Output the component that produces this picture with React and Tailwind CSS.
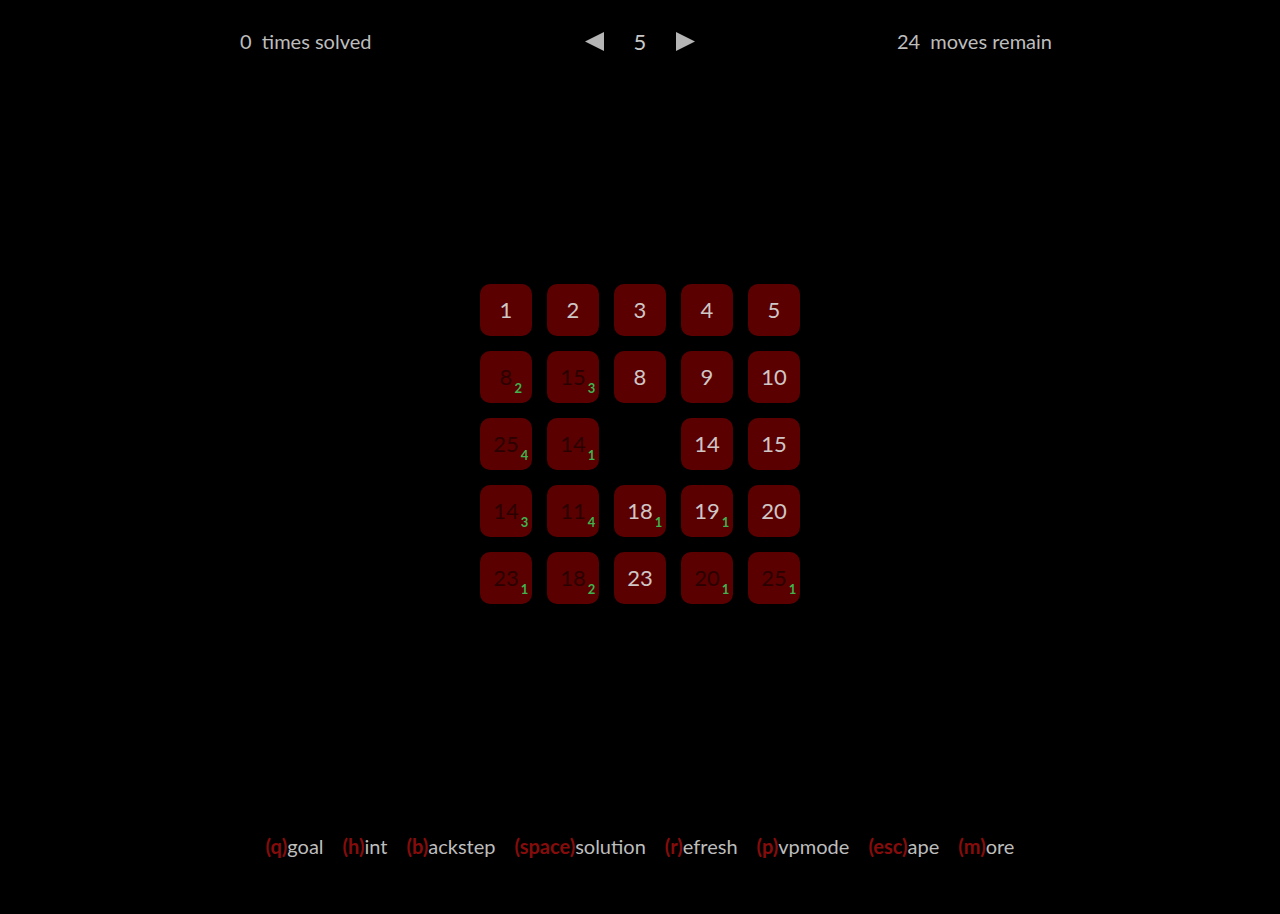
const rows = [
  [[1], [2], [3], [4], [5]],
  [[8, 2, true], [15, 3, true], [8], [9], [10]],
  [[25, 4, true], [14, 1, true], null, [14], [15]],
  [[14, 3, true], [11, 4, true], [18, 1], [19, 1], [20]],
  [[23, 1, true], [18, 2, true], [23], [20, 1, true], [25, 1, true]],
]

const keys = [
  ['q', 'goal'],
  ['h', 'int'],
  ['b', 'ackstep'],
  ['space', 'solution'],
  ['r', 'efresh'],
  ['p', 'vpmode'],
  ['esc', 'ape'],
  ['m', 'ore'],
]

function Tile({ cell }) {
  if (!cell) return <div className="w-[52px] h-[52px]" />
  const [n, hint, dim] = cell
  return (
    <div className="w-[52px] h-[52px] rounded-[10px] bg-[#5a0000] flex items-center justify-center">
      <span className={'relative text-[22px] leading-none ' + (dim ? 'text-[#2a0101]' : 'text-[#cfc6c6]')}>
        {n}
        {hint && (
          <span className="absolute left-full ml-[2px] top-[16px] text-[13px] font-bold leading-none text-[#3fb34f]">
            {hint}
          </span>
        )}
      </span>
    </div>
  )
}

export default function App() {
  return (
    <div className="min-h-[914px] bg-black flex flex-col text-[#bdbdbd]" style={{ fontFamily: 'Lato, "Noto Sans", sans-serif' }}>
      <header className="h-[82px] flex items-center">
        <div className="w-[824px] mx-auto grid grid-cols-[1fr_auto_1fr] items-center text-[20px]">
          <div className="pl-[12px]">0&nbsp; times solved</div>
          <div className="flex items-center gap-[30px]">
            <svg width="19" height="19" viewBox="0 0 19 19"><polygon points="19,0 19,19 0,9.5" fill="#b5b5b5" /></svg>
            <span className="text-[22px] text-[#c8c8c8]">5</span>
            <svg width="19" height="19" viewBox="0 0 19 19"><polygon points="0,0 0,19 19,9.5" fill="#b5b5b5" /></svg>
          </div>
          <div className="text-right">24&nbsp; moves remain</div>
        </div>
      </header>

      <main className="flex-1 flex items-center justify-center">
        <div className="flex flex-col gap-[15px]">
          {rows.map((r, i) => (
            <div key={i} className="flex gap-[15px]">
              {r.map((c, j) => (
                <Tile key={j} cell={c} />
              ))}
            </div>
          ))}
        </div>
      </main>

      <footer className="h-[109px] pt-[26px] flex justify-center gap-[19px] text-[20px]">
        {keys.map(([k, rest]) => (
          <span key={k}>
            <span className="text-[#860c0c] font-bold">({k})</span>
            {rest}
          </span>
        ))}
      </footer>
    </div>
  )
}
